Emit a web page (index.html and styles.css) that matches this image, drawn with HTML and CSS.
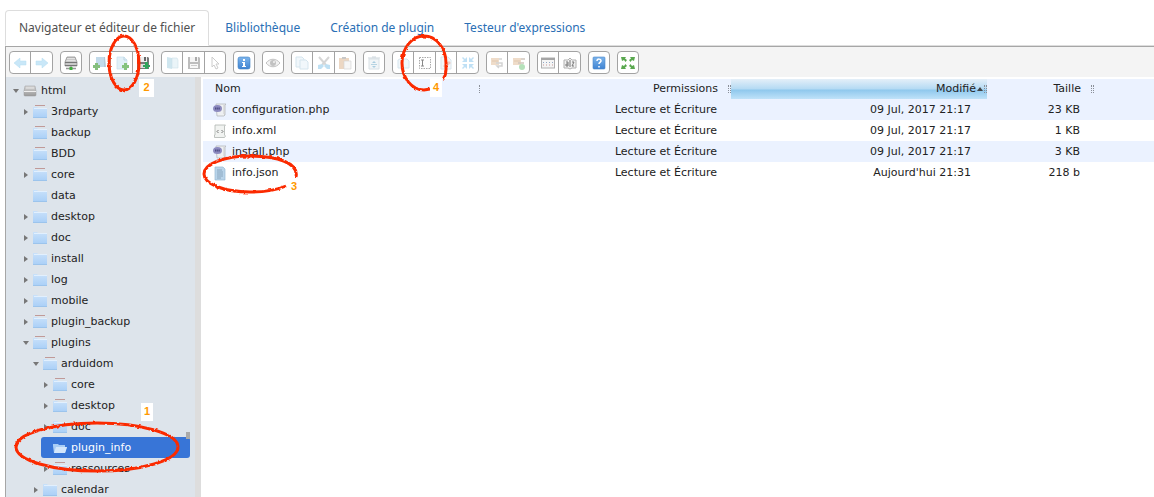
FILE: index.html
```html
<!DOCTYPE html>
<html lang="fr">
<head>
<meta charset="utf-8">
<title>Navigateur et éditeur de fichier</title>
<meta name="viewport" content="width=device-width, initial-scale=1">
<link rel="stylesheet" href="styles.css">
</head>
<body>
<svg class="sprite" aria-hidden="true">
  <defs>
    <linearGradient id="g-blue" x1="0" y1="0" x2="0" y2="1"><stop offset="0" stop-color="#7db5ec"/><stop offset="1" stop-color="#3f83d2"/></linearGradient>
    <linearGradient id="g-folder" x1="0" y1="0" x2="0" y2="1"><stop offset="0" stop-color="#c9e1fa"/><stop offset="1" stop-color="#a9cff7"/></linearGradient>
    <linearGradient id="g-drive" x1="0" y1="0" x2="0" y2="1"><stop offset="0" stop-color="#d6d6d6"/><stop offset="1" stop-color="#9a9a9a"/></linearGradient>
    <filter id="rough" x="-10%" y="-10%" width="120%" height="120%"><feTurbulence type="fractalNoise" baseFrequency="0.3" numOctaves="1" seed="4"/><feDisplacementMap in="SourceGraphic" scale="3" xChannelSelector="R" yChannelSelector="G"/></filter>
  </defs>
  <symbol id="i-back" viewBox="0 0 16 16"><path d="M2 8l6-5v3h6v4H8v3z" fill="#c9e7f8" stroke="#b5dcf1" stroke-width=".5"/></symbol>
  <symbol id="i-forward" viewBox="0 0 16 16"><path d="M14 8L8 3v3H2v4h6v3z" fill="#c9e7f8" stroke="#b5dcf1" stroke-width=".5"/></symbol>
  <symbol id="i-netdrive" viewBox="0 0 16 16"><path d="M4 2h8l2 5v4H2V7z" fill="#c9c9c9" stroke="#858585" stroke-width=".7"/><path d="M4 3.500h8M3.500 5.500h9" stroke="#e9e9e9" stroke-width=".8"/><path d="M2 7.500h12M2 10.500h12" stroke="#777"/><path d="M8 11v2M3 13.500h10" stroke="#999" stroke-width="1.300"/><path d="M6.500 12h3v3h-3z" fill="#3fae3f"/></symbol>
  <symbol id="i-newfolder" viewBox="0 0 16 16"><path d="M4 2h9l1 10H4z" fill="#b4c9d8"/><path d="M4 2h8v10H4z" fill="#c2daea"/><path d="M3 8h3v2h2v3H6v2H3v-2H1v-3h2z" fill="#85bf7d"/></symbol>
  <symbol id="i-newfile" viewBox="0 0 16 16"><path d="M3 2h7l3 3v9H3z" fill="#e1f0f8" stroke="#c8dfec" stroke-width=".7"/><path d="M10 2v3h3" fill="none" stroke="#bcd5e3"/><path d="M10 8h3v2h2v3h-2v2h-3v-2H8v-3h2z" fill="#85c37e"/></symbol>
  <symbol id="i-upload" viewBox="0 0 16 16"><path d="M2 2h11l1 1v11H2z" fill="#787878"/><path d="M4 2h8v5H4z" fill="#eee"/><path d="M9 2h2v4H9z" fill="#666"/><path d="M4 9h8v4H4z" fill="#ddd"/><path d="M10 7h3v3h2v2h-2v2h-3v-2H8v-2h2z" fill="#32a35b"/></symbol>
  <symbol id="i-open" viewBox="0 0 16 16"><path d="M3 2l5 1v11l-5-1z" fill="#cfe6ef"/><path d="M8 3h5l1 2v8H8z" fill="#eaf4f8" stroke="#cde1ea" stroke-width=".6"/></symbol>
  <symbol id="i-save" viewBox="0 0 16 16"><path d="M2 2h11l1 1v11H2z" fill="#bdbdbd"/><path d="M4 2h8v5H4z" fill="#f5f5f5"/><path d="M9 2h2v4H9z" fill="#aaa"/><path d="M4 9h8v4H4z" fill="#f7f7f7"/><path d="M5 10.500h6" stroke="#ccc"/></symbol>
  <symbol id="i-cursor" viewBox="0 0 16 16"><path d="M5 2l7 7H9l2 4-2 1-2-4-2 2z" fill="#fff" stroke="#ccc"/></symbol>
  <symbol id="i-info" viewBox="0 0 16 16"><rect x="2" y="2" width="12" height="12" rx="2" fill="url(#g-blue)" stroke="#3d7fc5" stroke-width=".6"/><path d="M7 4h2v2H7zM6 7h3v4h1v1H6v-1h1V8H6z" fill="#fff"/></symbol>
  <symbol id="i-eye" viewBox="0 0 16 16"><path d="M1 8c4-5 10-5 14 0c-4 5-10 5-14 0z" fill="#f2f2f2" stroke="#c2c2c2"/><circle cx="8" cy="8" r="3" fill="#c2c2c2"/><circle cx="9" cy="7" r="1" fill="#f2f2f2"/></symbol>
  <symbol id="i-copy" viewBox="0 0 16 16"><path d="M2 2h6l2 2v8H2z" fill="#f1f7fb" stroke="#d5e5ee"/><path d="M6 5h6l2 2v7H6z" fill="#f1f7fb" stroke="#d5e5ee"/></symbol>
  <symbol id="i-cut" viewBox="0 0 16 16"><path d="M3 2l7 8M13 2l-7 8" stroke="#d6d6d6" stroke-width="2"/><path d="M2 10l4-1 2 2-3 3H2zM14 10l-4-1-2 2 3 3h3z" fill="#bfe0f3"/></symbol>
  <symbol id="i-paste" viewBox="0 0 16 16"><path d="M2 3h10v11H2z" fill="#ecd7c3"/><path d="M5 2h4v2H5z" fill="#c8c8c8"/><path d="M7 6h7v8H7z" fill="#f6f6f6" stroke="#d5d5d5" stroke-width=".7"/></symbol>
  <symbol id="i-trash" viewBox="0 0 16 16"><path d="M3 4h10v10H3z" fill="#f1f5f7" stroke="#d9e1e6"/><path d="M2 3h12M6 2h4" stroke="#ccd6dc"/><path d="M8 6l2 2H6zM6 11h4l-2 2z" fill="#aacde0"/><path d="M5 9.500h6" stroke="#b7d4e2"/></symbol>
  <symbol id="i-dup" viewBox="0 0 16 16"><path d="M3 5l4-2 3 2v8H3z" fill="#f1f7fb" stroke="#d5e5ee"/><path d="M7 4h5l2 2v7H7z" fill="#f1f7fb" stroke="#d5e5ee"/></symbol>
  <symbol id="i-rename" viewBox="0 0 16 16"><rect x="2.500" y="2.500" width="11" height="11" fill="#fff" stroke="#aaa" stroke-dasharray="1.500 1"/><path d="M4 5h3M5.500 5v6M4 11h3" stroke="#888" stroke-width="1"/></symbol>
  <symbol id="i-edit" viewBox="0 0 16 16"><path d="M3 2h7l3 3v9H3z" fill="#f3f7fa" stroke="#d8e5ed"/><path d="M5 11l6-5 2 2-6 5z" fill="#eccbc5"/></symbol>
  <symbol id="i-resize" viewBox="0 0 16 16"><path d="M7 7H2l2-2-2-2 1-1 2 2 2-2zM9 7h5l-2-2 2-2-1-1-2 2-2-2zM7 9H2l2 2-2 2 1 1 2-2 2 2zM9 9h5l-2 2 2 2-1 1-2-2-2 2z" fill="#bfe0f5"/></symbol>
  <symbol id="i-extract" viewBox="0 0 16 16"><path d="M2 3h8v7H2z" fill="#efdcc9"/><path d="M10 4h3M7 8h6v3H8l2 2" fill="none" stroke="#d3d3d3" stroke-width="1.500"/><path d="M3 6h6" stroke="#e0c8af"/></symbol>
  <symbol id="i-archive" viewBox="0 0 16 16"><path d="M2 3h8v7H2z" fill="#efdcc9"/><path d="M10 4h4M7 8h6" fill="none" stroke="#d0c6bd" stroke-width="1.500"/><path d="M3 6h6" stroke="#e0c8af"/><circle cx="11" cy="12" r="3" fill="#b5e1ba"/></symbol>
  <symbol id="i-view" viewBox="0 0 16 16"><rect x="1.500" y="3" width="13" height="10" fill="#f5f5f5" stroke="#b0b0b0"/><path d="M1 4h14" stroke="#a5a5a5" stroke-width="2"/><path d="M3 7.500h10" stroke="#93a7c4" stroke-dasharray="1 2"/><path d="M3 10h10" stroke="#c59797" stroke-dasharray="1 2"/></symbol>
  <symbol id="i-sort" viewBox="0 0 16 16"><path d="M2 5h4l2-2 2 2h4v8h-4l-2 1-2-1H2z" fill="#f1f1f1" stroke="#b0b0b0"/><path d="M4 7h2v4H4V9h2M8 5v7M10 7h2l-2 4h2" fill="none" stroke="#777"/></symbol>
  <symbol id="i-help" viewBox="0 0 16 16"><rect x="2" y="2" width="12" height="12" rx="1" fill="url(#g-blue)" stroke="#4c88c9" stroke-width=".6"/><path d="M6 6c0-3 4.500-2 4 0c-.3 1.300-2 1.500-2 3M8 11v1.500" fill="none" stroke="#fff" stroke-width="1.500"/></symbol>
  <symbol id="i-full" viewBox="0 0 16 16"><path d="M1 2h5L5 3.500 7 5 5.500 7 4 5 2 6zM15 2h-5l1 1.500L9 5l1.500 2L12 5l2 1zM1 14h5l-1-1.500L7 11 5.500 9 4 11l-2-1zM15 14h-5l1-1.500L9 11l1.500-2L12 11l2-1z" fill="#5aa84f"/></symbol>
  <symbol id="f-folder" viewBox="0 0 14 14"><path d="M0 2V1h4l1 1h9v11H0z" fill="url(#g-folder)"/><path d="M0 12.500h14" stroke="#9cc4ec"/><path d="M1 2.500h13" stroke="#e2f0fe"/></symbol>
  <symbol id="f-locked" viewBox="0 0 14 14"><path d="M0 3V2h4l1 1h9v10H0z" fill="url(#g-folder)"/><path d="M0 12.500h14" stroke="#9cc4ec"/><path d="M1 3.500h13" stroke="#e2f0fe"/><path d="M2 .5h10" stroke="#c09a98"/></symbol>
  <symbol id="f-open" viewBox="0 0 14 14"><path d="M0 3h5l1 1h6v2h2l-2 6H1L0 5z" fill="#a9cdf5"/><path d="M3 6h11l-2 6H1z" fill="#d3e6fb"/></symbol>
  <symbol id="f-drive" viewBox="0 0 14 14"><path d="M2 2h10l1 5v4q0 1-1 1H2q-1 0-1-1V7z" fill="url(#g-drive)" stroke="#999" stroke-width=".5"/><path d="M1 7.500h12" stroke="#eee"/><path d="M3 4h8" stroke="#e8e8e8"/></symbol>
  <symbol id="d-php" viewBox="0 0 16 16"><path d="M4 2h10l-1 1v10l-1 1H5z" fill="#eef0f2" stroke="#b4b8bb" stroke-width=".8"/><path d="M12 3v9l1 1" fill="none" stroke="#ccc"/><ellipse cx="5.500" cy="6.500" rx="4.500" ry="3.500" fill="#8c8abf"/><path d="M3 6.500h5" stroke="#4e4c85" stroke-width="2" stroke-dasharray="1.500 .6"/></symbol>
  <symbol id="d-xml" viewBox="0 0 16 16"><path d="M3 2h10.500l-1 1v9l1 1-1 1.500H2.500V12H3z" fill="#f1f3f1" stroke="#b0b5b1" stroke-width=".8"/><path d="M6.500 7L5 8.500 6.500 10M9.500 7L11 8.500 9.500 10" fill="none" stroke="#777"/></symbol>
  <symbol id="d-txt" viewBox="0 0 16 16"><path d="M3 2h8l2 2v11H3z" fill="#b9d4ea" stroke="#98b9d2" stroke-width=".7"/><path d="M5 5h5M5 7h6M5 9h6M5 11h6M5 13h4" stroke="#7d9cb5" stroke-width=".8"/></symbol>
</svg>

<ul class="tabs">
  <li><a class="tab tab-active" href="#navigateur">Navigateur et éditeur de fichier</a></li>
  <li><a class="tab" href="#bibliotheque">Blibliothèque</a></li>
  <li><a class="tab" href="#creation">Création de plugin</a></li>
  <li><a class="tab" href="#testeur">Testeur d'expressions</a></li>
</ul>

<main class="finder">
  <div class="toolbar">
    <div class="group"><button class="tool" aria-label="Précédent"><svg><use href="#i-back"/></svg></button><button class="tool" aria-label="Suivant"><svg><use href="#i-forward"/></svg></button></div>
    <div class="group"><button class="tool" aria-label="Monter un volume"><svg><use href="#i-netdrive"/></svg></button></div>
    <div class="group"><button class="tool" aria-label="Nouveau dossier"><svg><use href="#i-newfolder"/></svg></button><button class="tool" aria-label="Nouveau fichier"><svg><use href="#i-newfile"/></svg></button><button class="tool" aria-label="Envoyer"><svg><use href="#i-upload"/></svg></button></div>
    <div class="group"><button class="tool" aria-label="Ouvrir"><svg><use href="#i-open"/></svg></button><button class="tool" aria-label="Télécharger"><svg><use href="#i-save"/></svg></button><button class="tool" aria-label="Sélectionner"><svg><use href="#i-cursor"/></svg></button></div>
    <div class="group"><button class="tool" aria-label="Informations"><svg><use href="#i-info"/></svg></button></div>
    <div class="group"><button class="tool" aria-label="Aperçu"><svg><use href="#i-eye"/></svg></button></div>
    <div class="group"><button class="tool" aria-label="Copier"><svg><use href="#i-copy"/></svg></button><button class="tool" aria-label="Couper"><svg><use href="#i-cut"/></svg></button><button class="tool" aria-label="Coller"><svg><use href="#i-paste"/></svg></button></div>
    <div class="group"><button class="tool" aria-label="Supprimer"><svg><use href="#i-trash"/></svg></button></div>
    <div class="group"><button class="tool" aria-label="Dupliquer"><svg><use href="#i-dup"/></svg></button><button class="tool" aria-label="Renommer"><svg><use href="#i-rename"/></svg></button><button class="tool" aria-label="Éditer"><svg><use href="#i-edit"/></svg></button><button class="tool" aria-label="Redimensionner"><svg><use href="#i-resize"/></svg></button></div>
    <div class="group"><button class="tool" aria-label="Extraire"><svg><use href="#i-extract"/></svg></button><button class="tool" aria-label="Archiver"><svg><use href="#i-archive"/></svg></button></div>
    <div class="group"><button class="tool" aria-label="Affichage"><svg><use href="#i-view"/></svg></button><button class="tool" aria-label="Trier"><svg><use href="#i-sort"/></svg></button></div>
    <div class="group"><button class="tool" aria-label="Aide"><svg><use href="#i-help"/></svg></button></div>
    <div class="group"><button class="tool" aria-label="Plein écran"><svg><use href="#i-full"/></svg></button></div>
  </div>

  <div class="work">
    <nav class="tree">
      <ul>
        <li><a class="node root" href="#html"><span class="arrow down"></span><svg><use href="#f-drive"/></svg>html</a>
          <ul>
            <li><a class="node" href="#3rdparty"><span class="arrow right"></span><svg><use href="#f-locked"/></svg>3rdparty</a></li>
            <li><a class="node" href="#backup"><span class="arrow"></span><svg><use href="#f-locked"/></svg>backup</a></li>
            <li><a class="node" href="#bdd"><span class="arrow"></span><svg><use href="#f-locked"/></svg>BDD</a></li>
            <li><a class="node" href="#core"><span class="arrow right"></span><svg><use href="#f-locked"/></svg>core</a></li>
            <li><a class="node" href="#data"><span class="arrow"></span><svg><use href="#f-folder"/></svg>data</a></li>
            <li><a class="node" href="#desktop"><span class="arrow right"></span><svg><use href="#f-folder"/></svg>desktop</a></li>
            <li><a class="node" href="#doc"><span class="arrow right"></span><svg><use href="#f-folder"/></svg>doc</a></li>
            <li><a class="node" href="#install"><span class="arrow right"></span><svg><use href="#f-folder"/></svg>install</a></li>
            <li><a class="node" href="#log"><span class="arrow right"></span><svg><use href="#f-folder"/></svg>log</a></li>
            <li><a class="node" href="#mobile"><span class="arrow right"></span><svg><use href="#f-folder"/></svg>mobile</a></li>
            <li><a class="node" href="#plugin_backup"><span class="arrow right"></span><svg><use href="#f-locked"/></svg>plugin_backup</a></li>
            <li><a class="node" href="#plugins"><span class="arrow down"></span><svg><use href="#f-locked"/></svg>plugins</a>
              <ul>
                <li><a class="node" href="#arduidom"><span class="arrow down"></span><svg><use href="#f-locked"/></svg>arduidom</a>
                  <ul>
                    <li><a class="node" href="#a-core"><span class="arrow right"></span><svg><use href="#f-locked"/></svg>core</a></li>
                    <li><a class="node" href="#a-desktop"><span class="arrow right"></span><svg><use href="#f-locked"/></svg>desktop</a></li>
                    <li><a class="node" href="#a-doc"><span class="arrow right"></span><svg><use href="#f-folder"/></svg>doc</a></li>
                    <li><a class="node selected" href="#plugin_info"><span class="arrow"></span><svg><use href="#f-open"/></svg>plugin_info</a></li>
                    <li><a class="node" href="#ressources"><span class="arrow right"></span><svg><use href="#f-locked"/></svg>ressources</a></li>
                  </ul>
                </li>
                <li><a class="node" href="#calendar"><span class="arrow right"></span><svg><use href="#f-folder"/></svg>calendar</a></li>
              </ul>
            </li>
          </ul>
        </li>
      </ul>
      <span class="resizer"></span>
    </nav>

    <section class="listing">
      <table class="files">
        <colgroup><col class="c-name"><col class="c-perm"><col class="c-date"><col class="c-size"><col></colgroup>
        <thead>
          <tr><th class="first"><span class="head">Nom<i class="grip"></i></span></th><th><span class="head">Permissions<i class="grip"></i></span></th><th class="sorted"><span class="head"><span class="label">Modifié<i class="up"></i></span><i class="grip"></i></span></th><th><span class="head">Taille<i class="grip"></i></span></th><th></th></tr>
        </thead>
        <tbody>
          <tr><td><span class="file"><svg><use href="#d-php"/></svg>configuration.php</span></td><td>Lecture et Écriture</td><td class="date">09 Jul, 2017 21:17</td><td>23 KB</td><td></td></tr>
          <tr><td><span class="file"><svg><use href="#d-xml"/></svg>info.xml</span></td><td>Lecture et Écriture</td><td class="date">09 Jul, 2017 21:17</td><td>1 KB</td><td></td></tr>
          <tr><td><span class="file"><svg><use href="#d-php"/></svg>install.php</span></td><td>Lecture et Écriture</td><td class="date">09 Jul, 2017 21:17</td><td>3 KB</td><td></td></tr>
          <tr><td><span class="file"><svg><use href="#d-txt"/></svg>info.json</span></td><td>Lecture et Écriture</td><td class="date">Aujourd'hui 21:31</td><td>218 b</td><td></td></tr>
        </tbody>
      </table>
    </section>
  </div>
</main>

<svg class="marks" aria-hidden="true">
  <g filter="url(#rough)">
    <ellipse cx="97" cy="447" rx="81" ry="24"/>
    <ellipse cx="124" cy="63" rx="15" ry="27"/>
    <path d="M296 177C299 163 277 156 250 156C224 156 204 164 204 174C204 184 224 192 250 192C264 192 277 190 286 186"/>
    <path d="M443 79C447 75 446 68 446 63C446 48 436 36 424 36C412 36 402 48 402 63C402 78 412 90 424 90L430 89"/>
  </g>
</svg>
<span class="step step-1">1</span>
<span class="step step-2">2</span>
<span class="step step-3">3</span>
<span class="step step-4">4</span>
</body>
</html>
```
FILE: styles.css
```css
* { box-sizing: border-box; }

body {
  margin: 0;
  padding: 10px 0 0 5px;
  height: 100vh;
  display: flex;
  flex-direction: column;
  position: relative;
  overflow: hidden;
  background: #fff;
  color: #222;
  font: 11px/21px "DejaVu Sans", sans-serif;
}

ul { list-style: none; margin: 0; padding: 0; }
a { text-decoration: none; }
.sprite { position: absolute; width: 0; height: 0; }

/* Tabs */
.tabs {
  flex: none;
  display: flex;
  gap: 2px;
  border-bottom: 1px solid #ddd;
  font: 12px/18px "Noto Sans", sans-serif;
}
.tab {
  display: block;
  margin-bottom: -1px;
  padding: 8px 13px;
  border: 1px solid transparent;
  border-radius: 4px 4px 0 0;
  color: #2a6fb5;
}
.tab-active {
  background: #fff;
  border-color: #ddd #ddd #fff;
  color: #505050;
}

/* File manager frame */
.finder {
  flex: 1;
  min-height: 0;
  display: flex;
  flex-direction: column;
  border: solid #a6a6a6;
  border-width: 1px 0 0 1px;
}
.toolbar {
  flex: none;
  display: flex;
  gap: 7px;
  padding: 4px 3px 3px;
  background: #f4f4f4;
}
.group {
  display: flex;
  height: 23px;
  border: 1px solid #a3a3a3;
  border-radius: 4px;
  background: #fff;
  overflow: hidden;
}
.tool {
  display: flex;
  align-items: center;
  justify-content: center;
  width: 22px;
  padding: 0;
  border: 0;
  border-left: 1px solid #a3a3a3;
  background: none;
}
.tool:first-child { width: 20px; border-left: 0; }
.tool:nth-child(3) { width: 21px; }
.tool svg { flex: none; width: 16px; height: 16px; }

.work { flex: 1; min-height: 0; display: flex; }

/* Folder tree */
.tree {
  flex: none;
  width: 195px;
  position: relative;
  padding: 3px 5px 0;
  border-right: 6px solid #ddd;
  background: #dde4eb;
  overflow: hidden;
}
.tree ul ul { padding-left: 10px; }
.node {
  display: flex;
  align-items: center;
  height: 21px;
  border-radius: 3px;
  color: #222;
}
.node svg { flex: none; width: 14px; height: 14px; margin-right: 4px; }
.selected { position: relative; background: #3875d7; color: #fff; }
.arrow { flex: none; width: 12px; padding-left: 2px; }
.arrow::before { content: ""; display: block; width: 0; }
.right::before { margin-left: 1px; border: solid transparent; border-width: 3px 0 3px 4px; border-left-color: #777; }
.down::before { border: solid transparent; border-width: 4px 3px 0; border-top-color: #777; }
.resizer { position: absolute; right: 5px; top: 355px; width: 4px; height: 7px; background: #aaa; }

/* File list */
.listing { flex: 1; min-width: 0; padding: 2px 0 0 2px; }
.files { width: 100%; table-layout: fixed; border-collapse: collapse; }
.c-name { width: 278px; }
.c-perm { width: 250px; }
.c-date { width: 256px; }
.c-size { width: 107px; }
.files th, .files td { height: 21px; padding: 0 14px 0 0; text-align: right; white-space: nowrap; }
.files th { height: 20px; padding: 0; line-height: 20px; font-weight: normal; background: #ebf2ff; }
.files td:first-child { padding: 0 0 0 9px; }
.files .date { padding-right: 16px; }
.files tbody tr:nth-child(odd) { background: #ebf2ff; }
.head { display: flex; align-items: center; justify-content: flex-end; gap: 10px; }
.first .head { justify-content: space-between; padding-left: 12px; }
.files .sorted { background: linear-gradient(#e4eff8, #b4daf3 50%, #8fc8ed 55%, #bfe2f9); }
.sorted .head { gap: 1px; }
.label { display: flex; align-items: center; gap: 1px; }
.up { border: solid transparent; border-width: 0 3px 4px; border-bottom-color: #444; }
.grip { width: 3px; height: 8px; border: dotted #8a8f98; border-width: 0 1px; }
.first .grip { border-right: 0; width: 1px; margin-right: 1px; }
.file { display: flex; align-items: center; gap: 4px; }
.file svg { flex: none; width: 16px; height: 16px; }

/* Hand-drawn step annotations */
.marks { position: absolute; inset: 0; width: 100%; height: 100%; pointer-events: none; fill: none; stroke: #fb2a06; stroke-width: 3; }
.step {
  position: absolute;
  width: 12px;
  height: 18px;
  background: #fff;
  color: #ff9900;
  font: bold 11px/17px "Liberation Sans", sans-serif;
  text-align: center;
}
.step-1 { left: 141px; top: 403px; }
.step-2 { left: 139px; top: 79px; width: 15px; }
.step-3 { left: 288px; top: 178px; }
.step-4 { left: 430px; top: 79px; }
```
